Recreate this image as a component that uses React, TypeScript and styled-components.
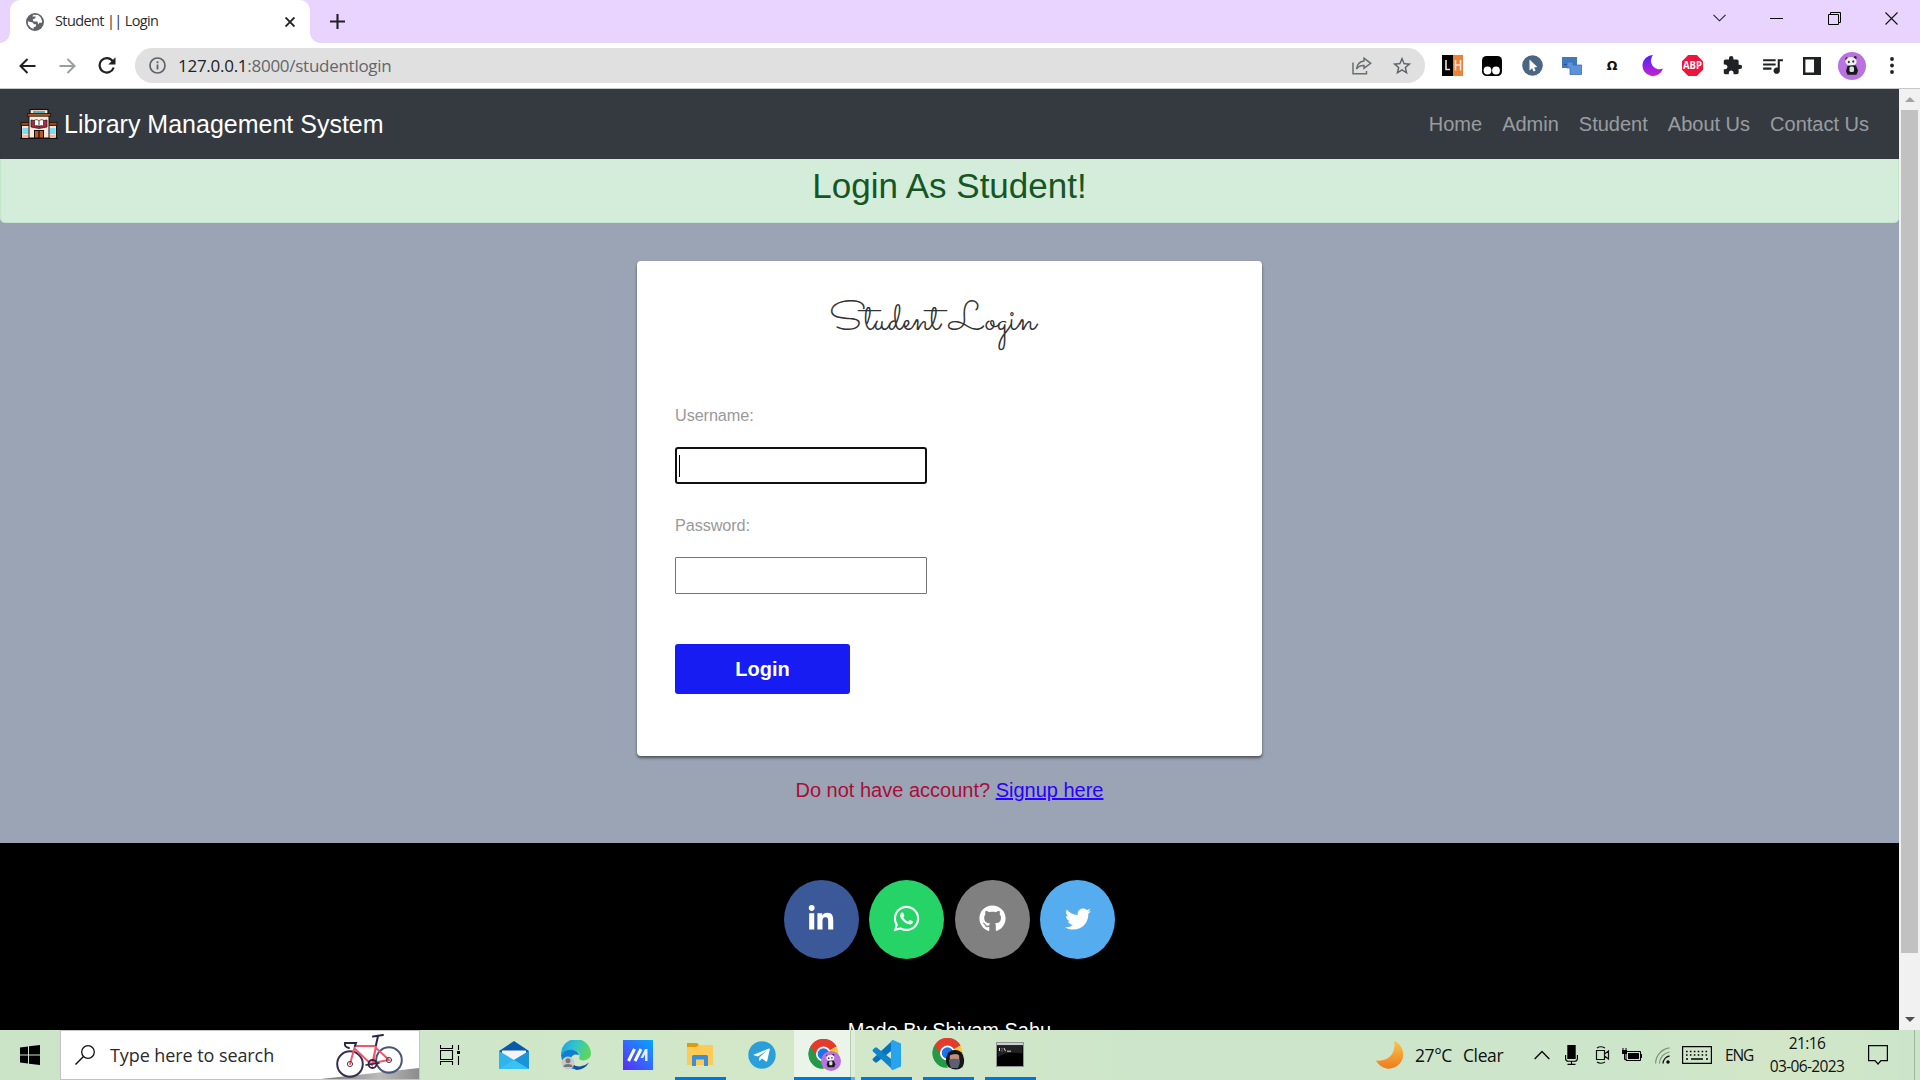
import React from "react";
import styled, { createGlobalStyle, css } from "styled-components";
import { FaLinkedinIn, FaWhatsapp, FaGithub, FaTwitter } from "react-icons/fa";
import { MdExtension, MdQueueMusic, MdStarBorder } from "react-icons/md";

const ui = `"Segoe UI", "Open Sans", "Noto Sans", sans-serif`;
const arial = `"Liberation Sans", Arial, sans-serif`;

const GlobalStyle = createGlobalStyle`
  *, *::before, *::after { box-sizing: border-box; }
  html, body { margin: 0; padding: 0; overflow: hidden; }
  svg { display: block; flex: none; }
`;

const Desktop = styled.div`
  width: 1920px;
  height: 1080px;
  display: grid;
  grid-template-rows: 43px 46px 941px 50px;
  overflow: hidden;
  background: #fff;
`;

/* ---------- browser frame ---------- */
const TabStrip = styled.header`
  display: flex;
  background: #e9d4ff;
  padding-left: 10px;
`;
const Tab = styled.div`
  position: relative;
  width: 300px;
  height: 43px;
  background: #fff;
  border-radius: 10px 10px 0 0;
  display: flex;
  align-items: center;
  padding: 0 15px 0 16px;
  &::before, &::after {
    content: "";
    position: absolute;
    bottom: 0;
    width: 10px;
    height: 10px;
  }
  &::before { left: -10px; background: radial-gradient(circle at 0 0, transparent 9.5px, #fff 10px); }
  &::after { right: -10px; background: radial-gradient(circle at 100% 0, transparent 9.5px, #fff 10px); }
`;
const TabTitle = styled.span`
  flex: 1;
  margin-left: 11px;
  font: 400 14.5px/20px ${ui};
  letter-spacing: -0.62px;
  color: #2b2c2f;
  white-space: nowrap;
  padding-bottom: 2px;
`;
const NewTab = styled.div`
  display: flex;
  align-items: center;
  margin-left: 20px;
  flex: 1;
`;
const WindowButtons = styled.div`
  display: flex;
  height: 36px;
`;
const WindowButton = styled.div`
  width: 57.3px;
  display: flex;
  align-items: center;
  justify-content: center;
`;

const Toolbar = styled.div`
  display: flex;
  align-items: center;
  border-bottom: 1px solid #c4c7c5;
  background: #fff;
  padding: 0 8px 0 7px;
`;
const NavButton = styled.div`
  width: 40px;
  display: flex;
  justify-content: center;
`;
const Omnibox = styled.div`
  display: flex;
  align-items: center;
  width: 1290px;
  height: 35px;
  margin: 0 7px 0 8px;
  padding: 0 3px 0 14px;
  border-radius: 18px;
  background: #e0e0e0;
`;
const Url = styled.span`
  flex: 1;
  margin-left: 12px;
  font: 400 17px/24px ${ui};
  letter-spacing: -0.27px;
  color: #63666a;
  b { font-weight: 400; color: #202124; }
`;
const OmniIcon = styled.div`
  width: 40px;
  display: flex;
  justify-content: center;
  color: #5f6368;
`;
const Slot = styled.div`
  width: 40px;
  display: flex;
  justify-content: center;
  color: #202124;
`;
const Omega = styled.span`
  font: 700 12.500px/20px "DejaVu Sans", sans-serif;
  color: #111;
`;

/* ---------- web page ---------- */
const Viewport = styled.div`
  display: grid;
  grid-template-columns: 1899px 21px;
  overflow: hidden;
`;
const Page = styled.main`
  height: 941px;
  overflow: hidden;
  background: #9ba4b5;
  font-family: ${arial};
  display: flex;
  flex-direction: column;
`;
const Navbar = styled.nav`
  flex: none;
  height: 70px;
  display: flex;
  align-items: center;
  justify-content: space-between;
  background: #343a40;
  padding: 0 20px;
`;
const Brand = styled.div`
  display: flex;
  align-items: center;
  gap: 6px;
  color: #fff;
  font-size: 25px;
  line-height: 38px;
  white-space: nowrap;
`;
const NavLinks = styled.div`
  display: flex;
`;
const NavLink = styled.a`
  padding: 0 10px;
  font-size: 20px;
  line-height: 30px;
  color: rgba(255, 255, 255, 0.5);
`;
const Alert = styled.div`
  flex: none;
  height: 64px;
  border: 1px solid #c3e6cb;
  border-top: 0;
  border-radius: 0 0 5px 5px;
  background: #d4edda;
  color: #155724;
  font-size: 35px;
  line-height: 42px;
  padding-top: 6px;
  text-align: center;
`;
const Card = styled.section`
  flex: none;
  width: 625px;
  height: 495px;
  margin: 38px auto 0;
  background: #fff;
  border-radius: 4px;
  box-shadow: 0 2px 3px rgba(0, 0, 0, 0.5);
  padding: 34px 38px 0;
  display: flex;
  flex-direction: column;
  align-items: flex-start;
`;
const CardTitle = styled.h2`
  align-self: center;
  margin: 0 34px 54px 0;
  height: 54px;
  font: 400 40px/52px Sacramento, Lato, cursive;
  color: #333;
  white-space: nowrap;
`;
const Label = styled.label`
  font-size: 16.25px;
  line-height: 24px;
  margin-bottom: 20px;
  letter-spacing: -0.1px;
  color: #999;
`;
const Field = styled.div<{ $focused?: boolean }>`
  width: 252px;
  height: 37px;
  margin-bottom: 29px;
  background: #fff;
  display: flex;
  align-items: center;
  ${(p) =>
    p.$focused
      ? css`border: 2px solid #101010; border-radius: 3px; padding-left: 2px;`
      : css`border: 1px solid #767676; border-radius: 1px;`}
`;
const Caret = styled.i`
  width: 1px;
  height: 22px;
  background: #000;
`;
const Submit = styled.div`
  margin-top: 21px;
  width: 175px;
  height: 50px;
  border-radius: 3px;
  background: #171cf2;
  color: #fff;
  font-size: 20px;
  font-weight: 700;
  line-height: 50px;
  text-align: center;
`;
const SignupLine = styled.p`
  flex: none;
  height: 87px;
  margin: 0;
  padding-top: 19px;
  text-align: center;
  font-size: 20px;
  line-height: 30px;
  color: #ab0c37;
  a { color: #2a00ff; text-decoration: underline; }
`;
const Footer = styled.footer`
  flex: none;
  height: 300px;
  background: #000;
  padding-top: 37px;
  color: #fff;
  text-align: center;
`;
const Socials = styled.div`
  display: flex;
  justify-content: center;
  gap: 10.4px;
  margin-bottom: 56px;
`;
const Social = styled.a<{ $bg: string }>`
  width: 75px;
  height: 79px;
  border-radius: 50%;
  background: ${(p) => p.$bg};
  display: flex;
  align-items: center;
  justify-content: center;
  padding-bottom: 2px;
  color: #fff;
`;
const Credit = styled.div`
  font-size: 20px;
  line-height: 30px;
`;
const Scrollbar = styled.div`
  background: #f1f1f1;
  display: flex;
  flex-direction: column;
  align-items: center;
`;
const ScrollArrow = styled.div`
  height: 21px;
  display: flex;
  align-items: center;
`;
const Thumb = styled.div`
  width: 17px;
  height: 843px;
  background: #c1c1c1;
  margin-bottom: auto;
`;

/* ---------- taskbar ---------- */
const Taskbar = styled.div`
  display: flex;
  background: linear-gradient(90deg, #cbe4c8 0, #cfe6ca 25%, #d3e8c8 42%, #cde5ca 60%, #cde5ca 85%, #d3e7c7 93%, #cbe4ca 100%);
  font-family: ${ui};
  color: #111;
`;
const Start = styled.div`
  width: 60px;
  display: flex;
  align-items: center;
  justify-content: center;
`;
const SearchBox = styled.div`
  width: 360px;
  height: 50px;
  border: 1px solid #c3c3c3;
  background: #fff;
  display: flex;
  align-items: center;
  padding-left: 14px;
  overflow: hidden;
`;
const SearchText = styled.span`
  width: 212px;
  margin-left: 15px;
  font-size: 18px;
  line-height: 26px;
  letter-spacing: -0.08px;
  white-space: nowrap;
  color: #2b2b2b;
`;
const TaskView = styled.div`
  width: 63px;
  display: flex;
  align-items: center;
  padding-left: 20px;
`;
const AppSlot = styled.div<{ $running?: boolean; $active?: boolean }>`
  width: 62px;
  height: 50px;
  padding-bottom: ${(p) => (p.$active ? 0 : 1)}px;
  display: flex;
  align-items: center;
  justify-content: center;
  background-repeat: no-repeat;
  ${(p) =>
    p.$running &&
    !p.$active &&
    css`background-image: linear-gradient(#0078d7, #0078d7); background-size: 51px 3px; background-position: 6px 100%;`}
  ${(p) =>
    p.$active &&
    css`
      background-image: linear-gradient(#0078d7, #0078d7), linear-gradient(#66abe0, #66abe0),
        linear-gradient(#b5ccb0, #b5ccb0), linear-gradient(#ebf4e8, #ebf4e8), linear-gradient(#dfeeda, #dfeeda);
      background-size: 57px 3px, 4px 3px, 1px 50px, 56px 50px, 4px 50px;
      background-position: 1px 47px, 58px 47px, 57px 0, 1px 0, 58px 0;
    `}
`;
const Tray = styled.div`
  margin-left: auto;
  display: flex;
  align-items: center;
  padding-right: 5px;
`;
const TrayItem = styled.div<{ $w: number }>`
  width: ${(p) => p.$w}px;
  display: flex;
  align-items: center;
  white-space: nowrap;
  font-size: 17.5px;
  letter-spacing: -0.4px;
`;
const Lang = styled(TrayItem)`
  font-size: 15.500px;
  letter-spacing: -1.1px;
`;
const Clock = styled.div`
  width: 78px;
  text-align: center;
  font-size: 15.500px;
  line-height: 23px;
  letter-spacing: -0.65px;
  margin-right: 22px;
  white-space: nowrap;
`;
const ShowDesktop = styled.div`
  width: 1px;
  height: 50px;
  background: #9db79c;
`;

/* ---------- drawings ---------- */
const Globe = () => (
  <svg width="18" height="18" viewBox="0 0 18 18">
    <circle cx="9" cy="9" r="9" fill="#5f6368" />
    <path d="M1.8 8.2 6.6 9.6 8 11.3 10.2 11.2 10 13.2 7.5 14.5 7.6 16 4.8 14.8 2 11.5ZM7.2 1.8 12 2 14.8 4.6 16.1 8.2 15.6 10 13.6 9.6 12.2 11.4 11.4 8.6 7.6 8.4 6.6 6.6 9.2 5.2 9.8 3.4 6.4 3.6Z" fill="#fff" />
  </svg>
);
const House = () => (
  <svg width="38" height="32" viewBox="0 0 38 32">
    <rect x="10" y="1.5" width="18" height="5" fill="#ffe4d2" stroke="#111" strokeWidth="1.2" />
    <rect x="13" y="3" width="12" height="2" fill="#4fb3c4" />
    <rect x="1.5" y="17" width="9" height="13" fill="#ffe0cd" stroke="#111" />
    <rect x="27.5" y="17" width="9" height="13" fill="#ffe0cd" stroke="#111" />
    <rect x="1" y="14.3" width="9" height="3" fill="#9a4a1d" stroke="#111" strokeWidth=".8" />
    <rect x="28" y="14.3" width="9" height="3" fill="#9a4a1d" stroke="#111" strokeWidth=".8" />
    <rect x="2.5" y="20" width="6" height="6" fill="#7bdcf5" />
    <rect x="29.5" y="20" width="6" height="6" fill="#7bdcf5" />
    <path d="M2.5 27h6v3h-6zM29.5 27h6v3h-6z" fill="#f3b79b" />
    <rect x="9" y="7" width="20" height="23" fill="#ffe8dc" stroke="#111" />
    <rect x="7.3" y="5.6" width="23.4" height="2.6" fill="#b5591f" stroke="#111" strokeWidth=".8" />
    <path d="M11 12 19 13.500l8-1.500v7L19 20.500l-8-1.500Z" fill="#b3283c" stroke="#111" strokeWidth=".7" />
    <path d="M14.500 12q2.500-1 4.500.7 2-1.700 4.500-.7v6q-2.500-1-4.500.6-2-1.600-4.500-.6Z" fill="#fff" stroke="#111" strokeWidth=".6" />
    <path d="M19 13v6" stroke="#111" strokeWidth=".8" />
    <rect x="14.500" y="22.500" width="9" height="7.500" fill="#b85a22" stroke="#111" />
    <path d="M19 22.500v7.500M0 30.500h38" stroke="#111" strokeWidth="1.200" />
  </svg>
);
const Panda = ({ s }: { s: number }) => (
  <svg width={s} height={s} viewBox="0 0 28 28">
    <circle cx="14" cy="14" r="14" fill="#b973e0" />
    <circle cx="8.800" cy="6.800" r="1.500" fill="#222" />
    <circle cx="17.200" cy="5.600" r="1.500" fill="#222" />
    <ellipse cx="13" cy="9.500" rx="5.600" ry="4.400" fill="#f3f1f3" />
    <ellipse cx="10.800" cy="10" rx="1" ry="1.200" fill="#333" />
    <ellipse cx="15.300" cy="9.500" rx="1" ry="1.200" fill="#333" />
    <path d="M9.500 14q4-1 8.500-.5l2 5-1.500 4.200h-9L8 19Z" fill="#19181b" />
    <rect x="11.500" y="14.500" width="4.500" height="5.500" rx="1.500" fill="#ddd" />
  </svg>
);
const Chrome = ({ children }: { children: React.ReactNode }) => (
  <svg width="33" height="33" viewBox="-.5 0 33 33">
    <path d="M15 15 2.010 7.500A15 15 0 0 1 27.990 7.500Z" fill="#e33b2e" />
    <path d="M15 15 27.990 7.500A15 15 0 0 1 15 30Z" fill="#fcc934" />
    <path d="M15 15 15 30A15 15 0 0 1 2.010 7.500Z" fill="#249a47" />
    <path d="M15 7.500H28a15 15 0 0 0-26-.2l6.500 11Z" fill="#e33b2e" />
    <path d="M2 7.500 8.600 18.800 15 22.500 11.500 29.600A15 15 0 0 1 2 7.500Z" fill="#249a47" />
    <circle cx="15" cy="15" r="7.500" fill="#fff" />
    <circle cx="15" cy="15" r="5.800" fill="#1a73e8" />
    {children}
  </svg>
);
const Bike = () => (
  <svg width="98" height="48" viewBox="0 0 98 48">
    <defs>
      <linearGradient id="ramp" x1="0" y1="0" x2="1" y2="0">
        <stop offset="0" stopColor="#777" />
        <stop offset=".6" stopColor="#bbb" />
        <stop offset="1" stopColor="#8c8c8c" />
      </linearGradient>
    </defs>
    <path d="M0 48 98 37V48Z" fill="url(#ramp)" />
    <g fill="none" strokeLinecap="round">
      <circle cx="29" cy="33" r="12.800" stroke="#34304f" strokeWidth="2" />
      <circle cx="68" cy="29" r="12.800" stroke="#4b5578" strokeWidth="2" />
      <path d="M29 33 34 15H55L51 34 34 18M55 15 52 32 68 29 55 17" stroke="#f0596c" strokeWidth="2" />
      <path d="M55 14 57 5M52 5.500l10-1.500M34 15 35 12H24q-1 4 4 5" stroke="#2b2748" strokeWidth="2" />
      <circle cx="51.500" cy="33" r="4" stroke="#2b2748" strokeWidth="1.800" />
      <path d="M45 34 58 32" stroke="#2b2748" strokeWidth="1.600" />
      <circle cx="29" cy="33" r="2.600" stroke="#444" strokeWidth="1" />
      <circle cx="68" cy="29" r="2.600" stroke="#444" strokeWidth="1" />
    </g>
  </svg>
);

const extensions = [
  <svg width="21" height="21" viewBox="0 0 21 21">
    <path d="M0 0h11v21H0z" fill="#000" />
    <path d="M11 0h10v21H11z" fill="#e8833a" />
    <path d="M4 5v9.500h4M13.500 5v10.500M18.500 5v10.500M13.500 10h5" stroke="#e9e4e0" strokeWidth="1.600" fill="none" />
  </svg>,
  <svg width="20" height="20" viewBox="0 0 20 20">
    <rect width="20" height="20" rx="4.500" fill="#000" />
    <circle cx="5.500" cy="14.500" r="3.900" fill="#fff" />
    <circle cx="14" cy="14.500" r="3.900" fill="#fff" />
  </svg>,
  <svg width="21" height="21" viewBox="0 0 21 21">
    <circle cx="10.500" cy="10.500" r="10.300" fill="#4b6584" />
    <path d="M7.500 4.500v11l2.600-2.300 1.500 3.300 2-.9-1.500-3.200 3.200-.3Z" fill="#fff" />
  </svg>,
  <svg width="20" height="18" viewBox="0 0 20 18">
    <path d="M0 0h15v11H0z" fill="#3f78bd" />
    <path d="M6 5v2.500h-4" stroke="#244f86" fill="none" />
    <path d="M5 5h6v3h8.500v9.500H8V11H5z" fill="#5b93d6" stroke="#3b70b3" strokeWidth=".8" />
  </svg>,
  <Omega>Ω</Omega>,
  <svg width="21" height="21" viewBox="0 0 21 21">
    <defs>
      <linearGradient id="moonA" x1="0" y1="0" x2="0" y2="1">
        <stop offset="0" stopColor="#4b22ff" />
        <stop offset="1" stopColor="#c822c8" />
      </linearGradient>
    </defs>
    <path d="M11 0A10.500 10.500 0 1 0 21 13.500 8.600 8.600 0 0 1 11 0Z" fill="url(#moonA)" />
  </svg>,
  <svg width="21" height="21" viewBox="0 0 21 21">
    <path d="M6.200 0h8.600L21 6.200v8.600L14.800 21H6.200L0 14.800V6.200Z" fill="#f0143c" />
    <text x="10.500" y="14.200" textAnchor="middle" fontFamily="Open Sans" fontWeight="700" fontSize="10" textLength="19" lengthAdjust="spacingAndGlyphs" fill="#fff">ABP</text>
  </svg>,
  <MdExtension size={21} />,
  <MdQueueMusic size={25} />,
  <svg width="18" height="18" viewBox="0 0 18 18">
    <path d="M1.200 1.200h15.600v15.600H1.200z" fill="none" stroke="#202124" strokeWidth="2.400" />
    <path d="M11 1h6v16h-6z" fill="#202124" />
  </svg>,
  <Panda s={28} />,
  <svg width="4" height="17" viewBox="0 0 4 17" fill="#202124">
    <circle cx="2" cy="2" r="1.900" />
    <circle cx="2" cy="8.500" r="1.900" />
    <circle cx="2" cy="15" r="1.900" />
  </svg>,
];

const apps: { el: React.ReactNode; running?: boolean; active?: boolean }[] = [
  {
    el: (
      <svg width="30" height="30" viewBox="0 0 30 30">
        <path d="M0 11 15 1 30 11V20H0Z" fill="#0a5aa8" />
        <path d="M3 10.500H27V20H3Z" fill="#f4f4f4" />
        <path d="M0 11 15 20 30 11V29H0Z" fill="#2fb5ee" />
        <path d="M15 20 30 29V11Z" fill="#1c93d8" />
        <path d="M0 29 15 20 30 29Z" fill="#37c2f3" />
      </svg>
    ),
  },
  {
    el: (
      <svg width="30" height="30" viewBox="0 0 30 30">
        <defs>
          <linearGradient id="edgeA" x1="0" y1="0" x2="1" y2=".3">
            <stop offset="0" stopColor="#1f9fe0" />
            <stop offset=".5" stopColor="#2fc3d0" />
            <stop offset="1" stopColor="#5cd65f" />
          </linearGradient>
        </defs>
        <path d="M0 15A15 15 0 0 1 30 13q0 7-7.500 7.500-5.500 0-4-3.500Q19 10 12 10 4 10 0 15Z" fill="url(#edgeA)" />
        <path d="M0 15Q4 9 12 10q5 .5 6 5-6-2-8 3-1 6 6 9 4 1.500 8-1A15 15 0 0 1 0 15Z" fill="#0f7fd4" />
        <path d="M10 18q0 9 9 8.500 5-.5 9-4A15 15 0 0 1 15 30Q10 26 10 18Z" fill="#10539c" />
        <circle cx="7" cy="23" r="6.500" fill="#c9c9c9" />
        <circle cx="7" cy="20.800" r="2.500" fill="#777" />
        <path d="M2.500 27q0-3 4.500-3t4.500 3Z" fill="#777" />
      </svg>
    ),
  },
  {
    el: (
      <svg width="30" height="30" viewBox="0 0 30 30">
        <defs>
          <linearGradient id="asusA" x1="0" y1="1" x2="1" y2="0">
            <stop offset="0" stopColor="#5a2df0" />
            <stop offset=".5" stopColor="#3568ff" />
            <stop offset="1" stopColor="#00a8ff" />
          </linearGradient>
        </defs>
        <path d="M0 0h30v30H0z" fill="url(#asusA)" />
        <path d="M5.500 21 11.500 9M12 21 18 9" stroke="#fff" strokeWidth="3" />
        <path d="M17.500 18 22 9H24.500V21H22V14.500L20 18Z" fill="#e8ecff" />
      </svg>
    ),
  },
  {
    running: true,
    el: (
      <svg width="28" height="26" viewBox="0 0 28 26">
        <path d="M1 1h10l3 3v4H1z" fill="#dd9a0b" />
        <path d="M1 5h9l3-2h14v20H1z" fill="#fccb55" />
        <path d="M6 24V14.500q0-1.500 1.500-1.500h13q1.500 0 1.500 1.500V24h-4v-6.500h-8V24Z" fill="#3b8fd9" />
      </svg>
    ),
  },
  {
    el: (
      <svg width="28" height="28" viewBox="0 0 28 28">
        <circle cx="14" cy="14" r="13.700" fill="#2a9fda" />
        <path d="M5.500 13.700 21 7.500q1-.3.8.8L19.200 20q-.3 1-1.200.5L14 17.600l-2 2q-.8.700-.9-.3l.3-3 7-6.300-8.500 5.400-4-1.200q-.8-.3-.4-.5Z" fill="#fff" />
      </svg>
    ),
  },
  {
    running: true,
    active: true,
    el: (
      <Chrome>
        <g transform="translate(12.500 12)">
          <Panda s={20} />
        </g>
      </Chrome>
    ),
  },
  {
    running: true,
    el: (
      <svg width="30" height="30" viewBox="0 0 30 30">
        <path d="M22 0 2 18.500q-1 1 0 2l2 1.800q1 .7 2 0L24 8Z" fill="#0a72b8" />
        <path d="M22 30 2 11.500q-1-1 0-2l2-1.800q1-.7 2 0L24 22Z" fill="#0f84cc" />
        <path d="M22 0 30 3.500v23L22 30q-1.500 0-2-1.500V1.500Q20.500 0 22 0Z" fill="#28a4ee" />
      </svg>
    ),
  },
  {
    running: true,
    el: (
      <Chrome>
        <path d="M22.500 12q8 0 9 9 .5 5-1.500 8-6 5-14 0-3-3-2.500-8 1-9 9-9Z" fill="#17171b" />
        <ellipse cx="22" cy="19.500" rx="4.800" ry="5.500" fill="#c0907a" />
        <path d="M16.500 21.500q5.500-1.500 11 0 0 5-2 8.500h-7q-2-3.500-2-8.500Z" fill="#5c6070" />
        <path d="M16.500 17.500q1-5 6-5t5.500 5q-5-3-11.500 0Z" fill="#111" />
      </Chrome>
    ),
  },
  {
    running: true,
    el: (
      <svg width="28" height="25" viewBox="0 0 28 25">
        <path d="M.5.500h27v24H.5z" fill="#000" stroke="#8f9595" />
        <path d="M1 1h26v2.200H1z" fill="#c9cdcf" />
        <path d="M1.500 15Q12 9 26.500 11.500V4h-25Z" fill="#222" />
        <path d="M3.500 6v3M6 6.500v.8M6 8.500v.8M8 6l1.500 3.200M11 9.200h4" stroke="#ddd" strokeWidth="1" />
      </svg>
    ),
  },
];

export default function App() {
  return (
    <Desktop>
      <GlobalStyle />
      <TabStrip>
        <Tab>
          <Globe />
          <TabTitle>Student || Login</TabTitle>
          <svg width="10" height="10" viewBox="0 0 10 10">
            <path d="M.5.500l9 9M9.500.500l-9 9" stroke="#202124" strokeWidth="1.900" />
          </svg>
        </Tab>
        <NewTab>
          <svg width="15" height="15" viewBox="0 0 15 15">
            <path d="M7.500 0v15M0 7.500h15" stroke="#202124" strokeWidth="2.100" />
          </svg>
        </NewTab>
        <WindowButtons>
          <WindowButton>
            <svg width="13" height="8" viewBox="0 0 13 8"><path d="M.5.800l6 6 6-6" fill="none" stroke="#222" strokeWidth="1.100" /></svg>
          </WindowButton>
          <WindowButton>
            <svg width="13" height="1" viewBox="0 0 13 1"><path d="M0 .5h13" stroke="#000" /></svg>
          </WindowButton>
          <WindowButton>
            <svg width="13" height="13" viewBox="0 0 13 13"><path d="M.5 2.500h10v10h-10zM2.500 2.500v-2h10v10h-2" fill="none" stroke="#000" /></svg>
          </WindowButton>
          <WindowButton>
            <svg width="13" height="13" viewBox="0 0 13 13"><path d="M.5.500l12 12M12.500.500l-12 12" stroke="#111" strokeWidth="1.100" /></svg>
          </WindowButton>
        </WindowButtons>
      </TabStrip>

      <Toolbar>
        <NavButton>
          <svg width="17" height="16" viewBox="0 0 17 16"><path d="M8.500 1 1.500 8l7 7M1.500 8H16.500" fill="none" stroke="#202124" strokeWidth="2" /></svg>
        </NavButton>
        <NavButton>
          <svg width="17" height="16" viewBox="0 0 17 16"><path d="M8.500 1l7 7-7 7M15.500 8H.5" fill="none" stroke="#9b9d9f" strokeWidth="2" /></svg>
        </NavButton>
        <NavButton>
          <svg width="18" height="17" viewBox="0 0 18 17">
            <path d="M14.600 4A7.200 7.200 0 1 0 15.700 10.500" fill="none" stroke="#202124" strokeWidth="2.200" />
            <path d="M17.500.300V7.500H10.300Z" fill="#202124" />
          </svg>
        </NavButton>
        <Omnibox>
          <svg width="17" height="17" viewBox="0 0 17 17">
            <circle cx="8.500" cy="8.500" r="7.500" fill="none" stroke="#5f6368" strokeWidth="1.700" />
            <path d="M8.500 7.500v5M8.500 4.300v1.900" stroke="#5f6368" strokeWidth="1.800" />
          </svg>
          <Url><b>127.0.0.1</b>:8000/studentlogin</Url>
          <OmniIcon>
            <svg width="20" height="18" viewBox="0 0 20 18">
              <path d="M1 5.500V16.700H14.500V14M12 1.200 18.700 6.300 12 11.200V8.500Q7 8.300 4.500 12 5.500 4.500 12 3.900Z" fill="none" stroke="#6b6e72" strokeWidth="1.500" />
            </svg>
          </OmniIcon>
          <OmniIcon><MdStarBorder size={22} /></OmniIcon>
        </Omnibox>
        {extensions.map((e, i) => (
          <Slot key={i}>{e}</Slot>
        ))}
      </Toolbar>

      <Viewport>
        <Page>
          <Navbar>
            <Brand>
              <House />
              Library Management System
            </Brand>
            <NavLinks>
              {["Home", "Admin", "Student", "About Us", "Contact Us"].map((l) => (
                <NavLink key={l}>{l}</NavLink>
              ))}
            </NavLinks>
          </Navbar>
          <Alert>Login As Student!</Alert>
          <Card>
            <CardTitle>Student Login</CardTitle>
            <Label>Username:</Label>
            <Field $focused><Caret /></Field>
            <Label>Password:</Label>
            <Field />
            <Submit>Login</Submit>
          </Card>
          <SignupLine>Do not have account? <a>Signup here</a></SignupLine>
          <Footer>
            <Socials>
              <Social $bg="#3b5998"><FaLinkedinIn size={28} /></Social>
              <Social $bg="#25d366"><FaWhatsapp size={29} /></Social>
              <Social $bg="#808080"><FaGithub size={27} /></Social>
              <Social $bg="#55acee"><FaTwitter size={26} /></Social>
            </Socials>
            <Credit>Made By Shivam Sahu</Credit>
          </Footer>
        </Page>
        <Scrollbar>
          <ScrollArrow>
            <svg width="10" height="5" viewBox="0 0 10 5"><path d="M0 5 5 0l5 5Z" fill="#a3a3a3" /></svg>
          </ScrollArrow>
          <Thumb />
          <ScrollArrow>
            <svg width="10" height="5" viewBox="0 0 10 5"><path d="M0 0l5 5 5-5Z" fill="#505050" /></svg>
          </ScrollArrow>
        </Scrollbar>
      </Viewport>

      <Taskbar>
        <Start>
          <svg width="20" height="20" viewBox="0 0 20 20">
            <path d="M0 2.600 8 1.400V9.500H0ZM9 1.300 20 0V9.500H9ZM0 10.500H8V18.600L0 17.400ZM9 10.500H20V20L9 18.700Z" fill="#000" />
          </svg>
        </Start>
        <SearchBox>
          <svg width="20" height="20" viewBox="0 0 20 20">
            <circle cx="13" cy="7" r="6.300" fill="none" stroke="#111" strokeWidth="1.300" />
            <path d="M8.500 11.500.5 19.500" stroke="#111" strokeWidth="1.400" />
          </svg>
          <SearchText>Type here to search</SearchText>
          <Bike />
        </SearchBox>
        <TaskView>
          <svg width="20" height="20" viewBox="0 0 20 20">
            <path d="M.5 0v3.500h12V0M.5 5.500h12v9H.5zM.5 20v-3.500h12V20M18.500 0v5M18.500 11v9" fill="none" stroke="#000" strokeWidth="1.100" />
            <path d="M17 6h3v3h-3z" />
          </svg>
        </TaskView>
        {apps.map((a, i) => (
          <AppSlot key={i} $running={a.running} $active={a.active}>{a.el}</AppSlot>
        ))}
        <Tray>
          <TrayItem $w={39}>
            <svg width="28" height="28" viewBox="0 0 28 28">
              <defs>
                <linearGradient id="moonB" x1="0" y1="0" x2="0" y2="1">
                  <stop offset="0" stopColor="#f7c64d" />
                  <stop offset="1" stopColor="#f07a1a" />
                </linearGradient>
              </defs>
              <path d="M18 0A14.300 14.300 0 1 1 0 19.500 Q9 20.500 14.500 15 20 9 18 0Z" fill="url(#moonB)" />
            </svg>
          </TrayItem>
          <TrayItem $w={48}>27°C</TrayItem>
          <TrayItem $w={71}>Clear</TrayItem>
          <TrayItem $w={31}>
            <svg width="16" height="10" viewBox="0 0 16 10"><path d="M.7 9 8 1.500 15.300 9" fill="none" stroke="#111" strokeWidth="1.500" /></svg>
          </TrayItem>
          <TrayItem $w={30}>
            <svg width="13" height="20" viewBox="0 0 13 20">
              <path d="M2.300 0h8.400v14H2.300z" />
              <path d="M.6 10v3.500q0 2.800 2.900 2.800h6q2.900 0 2.900-2.800V10M6.500 16v3.400M2.500 19.400h8" fill="none" stroke="#000" strokeWidth="1.100" />
            </svg>
          </TrayItem>
          <TrayItem $w={27}>
            <svg width="15" height="18" viewBox="0 0 15 18">
              <path d="M1.500 4.500h8v9h-8zM9.500 8l4-3v8l-4-3M2 2Q5.500-.5 10 2M2 16q3.500 2.500 8 0" fill="none" stroke="#111" strokeWidth="1.200" />
            </svg>
          </TrayItem>
          <TrayItem $w={33}>
            <svg width="20" height="15" viewBox="0 0 20 15">
              <path d="M4 3.500h14.500v9H4z" fill="none" stroke="#000" />
              <path d="M6 5h11v6H6zM19 6h1v4h-1zM0 2h5v4H0z" />
              <path d="M1 0v2M4 0v2M2.500 6v5.500h2" stroke="#000" fill="none" />
            </svg>
          </TrayItem>
          <TrayItem $w={27}>
            <svg width="15" height="17" viewBox="0 0 15 17" fill="none">
              <path d="M.6 16.500A16 16 0 0 1 14.500.8M4.500 16.500A12 12 0 0 1 14.500 5" stroke="#7c9079" strokeWidth="1.200" />
              <path d="M8 16.500A8 8 0 0 1 14.500 9" stroke="#111" strokeWidth="1.300" />
              <circle cx="13" cy="15" r="1.700" fill="#000" />
            </svg>
          </TrayItem>
          <TrayItem $w={43}>
            <svg width="30" height="18" viewBox="0 0 30 18" fill="none" stroke="#000">
              <path d="M.6.600h28.800v16.800H.6z" strokeWidth="1.200" />
              <path d="M4 5.500h22M4 9h22" strokeWidth="1.500" strokeDasharray="1.600 2.300" />
              <path d="M4 13h2M9 13h12M24 13h2" strokeWidth="1.300" />
            </svg>
          </TrayItem>
          <Lang $w={43}>ENG</Lang>
          <Clock>
            21:16
            <br />
            03-06-2023
          </Clock>
          <TrayItem $w={46}>
            <svg width="20" height="20" viewBox="0 0 20 20">
              <path d="M.6.600h18.800v15H13l-3 3.400-3-3.400H.6z" fill="none" stroke="#000" strokeWidth="1.200" />
            </svg>
          </TrayItem>
          <ShowDesktop />
        </Tray>
      </Taskbar>
    </Desktop>
  );
}
